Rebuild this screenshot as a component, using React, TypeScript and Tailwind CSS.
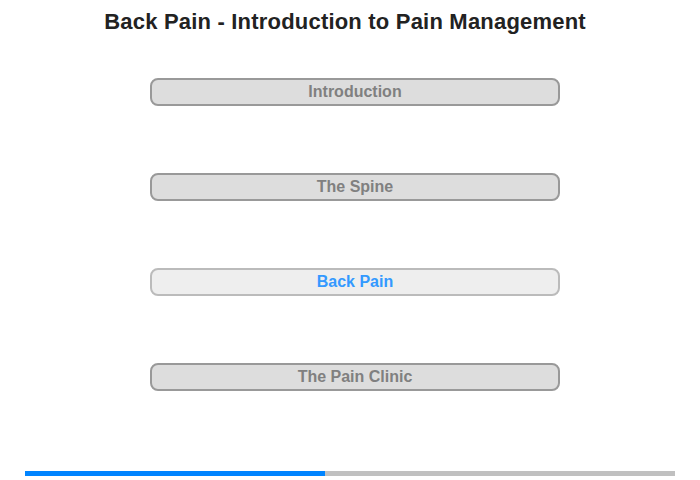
import React from "react";

const sections = [
    { title: "Introduction", active: false },
    { title: "The Spine", active: false },
    { title: "Back Pain", active: true },
    { title: "The Pain Clinic", active: false },
];

export default function App() {
    return (
        <div className="w-[700px] h-[480px] bg-white flex flex-col font-['Liberation_Sans',Arial,sans-serif]">
            <h1 className="pt-[9px] pr-[10px] text-center text-[22px] tracking-[0.2px] leading-[26px] font-bold text-[#222]">
                Back Pain - Introduction to Pain Management
            </h1>

            <div className="mt-[43px] flex flex-col gap-[67px] pl-[150px]">
                {sections.map((s) => (
                    <button
                        key={s.title}
                        className={
                            s.active
                                ? "w-[410px] h-[28px] rounded-[8px] border-2 border-[#bbb] bg-[#eee] text-[#3399ff] text-[16px] font-bold leading-none"
                                : "w-[410px] h-[28px] rounded-[8px] border-2 border-[#999] bg-[#ddd] text-[#808080] text-[16px] font-bold leading-none"
                        }
                    >
                        {s.title}
                    </button>
                ))}
            </div>

            <div className="mt-auto mb-[4px] mx-[25px] h-[5px] bg-[#c0c0c0] flex">
                <div className="w-[300px] h-full bg-[#0084ff]" />
            </div>
        </div>
    );
}
